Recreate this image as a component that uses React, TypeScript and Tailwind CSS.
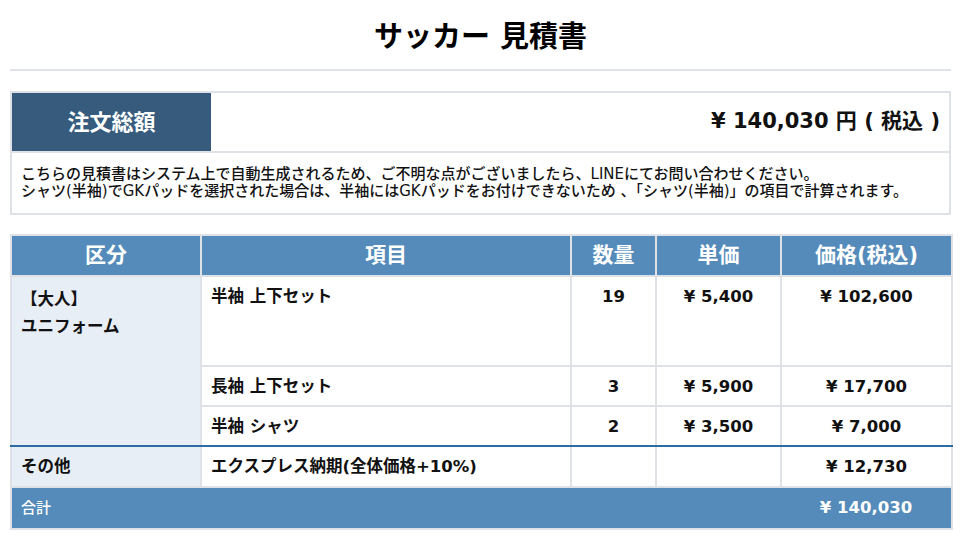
import React from 'react';

type Line = { name: string; qty: string; unit: string; price: string };

const uniform: Line[] = [
  { name: '半袖 上下セット', qty: '19', unit: '¥ 5,400', price: '¥ 102,600' },
  { name: '長袖 上下セット', qty: '3', unit: '¥ 5,900', price: '¥ 17,700' },
  { name: '半袖 シャツ', qty: '2', unit: '¥ 3,500', price: '¥ 7,000' },
];

const cell = 'border-2 border-[#dee2e6] align-top';

const App: React.FC = () => {
  return (
    <div
      className="w-[961px] h-[538px] bg-white text-[#111]"
      style={{ fontFamily: '"DejaVu Sans", "Noto Sans CJK JP", sans-serif' }}
    >
      <div className="h-[69px] pt-[6px] flex items-center justify-center">
        <h1 className="text-[29px] font-bold text-black">サッカー 見積書</h1>
      </div>
      <div className="mx-[10px] h-[2px] bg-[#dfe3e7]" />

      <div className="mx-[10px] mt-[20px] border-2 border-[#dee2e6]">
        <div className="flex h-[60px] border-b-2 border-[#dee2e6]">
          <div className="w-[199px] bg-[#365b7d] text-white text-[22px] font-bold flex items-center justify-center">
            注文総額
          </div>
          <div className="flex-1 flex items-center justify-end pr-[9px] text-[21px] font-bold">
            ¥ 140,030 円 ( 税込 )
          </div>
        </div>
        <div className="px-[9px] pt-[13px] pb-[13px] text-[15px] leading-[17px] font-medium">
          <p>こちらの見積書はシステム上で自動生成されるため、ご不明な点がございましたら、LINEにてお問い合わせください。</p>
          <p>シャツ(半袖)でGKパッドを選択された場合は、半袖にはGKパッドをお付けできないため 、「シャツ(半袖)」の項目で計算されます。</p>
        </div>
      </div>

      <table className="ml-[10px] mt-[19px] w-[941px] table-fixed border-collapse">
        <colgroup>
          <col className="w-[190px]" />
          <col className="w-[370px]" />
          <col className="w-[85px]" />
          <col className="w-[125px]" />
          <col className="w-[171px]" />
        </colgroup>
        <thead>
          <tr className="h-[41px] bg-[#548bba] text-white text-[21px] font-bold">
            <th className="border-2 border-[#dee2e6] font-bold">区分</th>
            <th className="border-2 border-[#dee2e6] font-bold">項目</th>
            <th className="border-2 border-[#dee2e6] font-bold">数量</th>
            <th className="border-2 border-[#dee2e6] font-bold">単価</th>
            <th className="border-2 border-[#dee2e6] font-bold">価格(税込)</th>
          </tr>
        </thead>
        <tbody className="text-[16.5px] font-bold">
          {uniform.map((l, i) => (
            <tr
              key={l.name}
              className={i === 0 ? 'h-[90px]' : i === 2 ? 'h-[40px] border-b-2 border-b-[#2e6aa4]' : 'h-[40px]'}
            >
              {i === 0 && (
                <td rowSpan={3} className={`${cell} bg-[#e8eef5] px-[9px] pt-[9px] leading-[27px] border-b-[#2e6aa4]`}>
                  <div>【大人】</div>
                  <div>ユニフォーム</div>
                </td>
              )}
              <td className={`${cell} px-[9px] pt-[8px] ${i === 2 ? 'border-b-[#2e6aa4]' : ''}`}>{l.name}</td>
              <td className={`${cell} pt-[8px] text-center ${i === 2 ? 'border-b-[#2e6aa4]' : ''}`}>{l.qty}</td>
              <td className={`${cell} pt-[8px] text-center ${i === 2 ? 'border-b-[#2e6aa4]' : ''}`}>{l.unit}</td>
              <td className={`${cell} pt-[8px] text-center ${i === 2 ? 'border-b-[#2e6aa4]' : ''}`}>{l.price}</td>
            </tr>
          ))}
          <tr className="h-[41px]">
            <td className={`${cell} bg-[#e8eef5] px-[9px] pt-[8px] border-t-[#2e6aa4]`}>その他</td>
            <td className={`${cell} px-[9px] pt-[8px] border-t-[#2e6aa4]`}>エクスプレス納期(全体価格+10%)</td>
            <td className={`${cell} border-t-[#2e6aa4]`} />
            <td className={`${cell} border-t-[#2e6aa4]`} />
            <td className={`${cell} pt-[8px] text-center border-t-[#2e6aa4]`}>¥ 12,730</td>
          </tr>
          <tr className="h-[42px] bg-[#548bba] text-white">
            <td colSpan={4} className="border-2 border-r-0 border-[#dee2e6] px-[9px] text-[15px] font-medium align-middle">
              合計
            </td>
            <td className="border-2 border-l-0 border-[#dee2e6] text-center text-[16.5px] font-bold align-middle">
              ¥ 140,030
            </td>
          </tr>
        </tbody>
      </table>
    </div>
  );
};

export default App;
